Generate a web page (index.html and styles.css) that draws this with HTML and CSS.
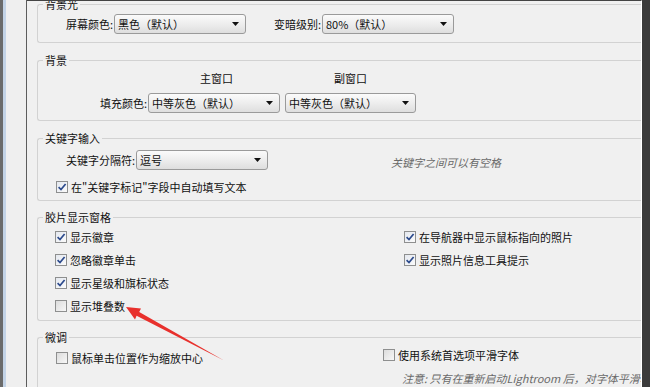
FILE: index.html
```html
<!DOCTYPE html>
<html lang="zh-CN">
<head>
    <meta charset="UTF-8">
    <meta name="viewport" content="width=device-width, initial-scale=1.0">
    <title>界面 | 首选项</title>
    <link rel="stylesheet" href="styles.css">
</head>
<body>
    <div class="left-rail"></div>

    <div class="panel">
        <!-- 背景光 -->
        <fieldset class="group group-lights">
            <legend>背景光</legend>
            <div class="row">
                <span class="field-label lbl-screen">屏幕颜色:</span>
                <div class="select"><span>黑色（默认）</span><svg class="caret" width="7" height="4" viewBox="0 0 7 4"><path d="M0 0h7L3.5 4z"/></svg></div>
                <span class="field-label lbl-dim">变暗级别:</span>
                <div class="select"><span>80%（默认）</span><svg class="caret" width="7" height="4" viewBox="0 0 7 4"><path d="M0 0h7L3.5 4z"/></svg></div>
            </div>
        </fieldset>

        <!-- 背景 -->
        <fieldset class="group group-bg">
            <legend>背景</legend>
            <div class="col-heads">
                <span class="col-head col-main">主窗口</span>
                <span class="col-head">副窗口</span>
            </div>
            <div class="row row-fill">
                <span class="field-label lbl-fill">填充颜色:</span>
                <div class="select"><span>中等灰色（默认）</span><svg class="caret" width="7" height="4" viewBox="0 0 7 4"><path d="M0 0h7L3.5 4z"/></svg></div>
                <div class="select select-second"><span>中等灰色（默认）</span><svg class="caret" width="7" height="4" viewBox="0 0 7 4"><path d="M0 0h7L3.5 4z"/></svg></div>
            </div>
        </fieldset>

        <!-- 关键字输入 -->
        <fieldset class="group group-keys">
            <legend>关键字输入</legend>
            <div class="row">
                <span class="field-label lbl-sep">关键字分隔符:</span>
                <div class="select"><span>逗号</span><svg class="caret" width="7" height="4" viewBox="0 0 7 4"><path d="M0 0h7L3.5 4z"/></svg></div>
                <span class="hint hint-keys">关键字之间可以有空格</span>
            </div>
            <label class="check check-keys">
                <span class="box checked"><svg width="10" height="10" viewBox="0 0 10 10"><path d="M1.6 5.2 4 7.6 8.6 2"/></svg></span>
                在"关键字标记"字段中自动填写文本
            </label>
        </fieldset>

        <!-- 胶片显示窗格 -->
        <fieldset class="group group-film">
            <legend>胶片显示窗格</legend>
            <div class="check-grid">
                <label class="check"><span class="box checked"><svg width="10" height="10" viewBox="0 0 10 10"><path d="M1.6 5.2 4 7.6 8.6 2"/></svg></span>显示徽章</label>
                <label class="check"><span class="box checked"><svg width="10" height="10" viewBox="0 0 10 10"><path d="M1.6 5.2 4 7.6 8.6 2"/></svg></span>在导航器中显示鼠标指向的照片</label>
                <label class="check"><span class="box checked"><svg width="10" height="10" viewBox="0 0 10 10"><path d="M1.6 5.2 4 7.6 8.6 2"/></svg></span>忽略徽章单击</label>
                <label class="check"><span class="box checked"><svg width="10" height="10" viewBox="0 0 10 10"><path d="M1.6 5.2 4 7.6 8.6 2"/></svg></span>显示照片信息工具提示</label>
                <label class="check"><span class="box checked"><svg width="10" height="10" viewBox="0 0 10 10"><path d="M1.6 5.2 4 7.6 8.6 2"/></svg></span>显示星级和旗标状态</label>
                <span></span>
                <label class="check"><span class="box"></span>显示堆叠数</label>
            </div>
        </fieldset>

        <!-- 微调 -->
        <fieldset class="group group-tune">
            <legend>微调</legend>
            <div class="tune-grid">
                <label class="check check-zoom"><span class="box"></span>鼠标单击位置作为缩放中心</label>
                <div class="tune-right">
                    <label class="check"><span class="box"></span>使用系统首选项平滑字体</label>
                    <span class="hint hint-font">注意: 只有在重新启动Lightroom 后，对字体平滑功能所做的更改才会生效。</span>
                </div>
            </div>
        </fieldset>
    </div>

    <div class="right-rail"></div>

    <svg class="callout" width="650" height="387" viewBox="0 0 650 387">
        <polygon points="126,307 141,308.5 139.2,312 224,360.5 136.6,315.8 135,319.5"/>
    </svg>
</body>
</html>
```

FILE: styles.css
```css
:root {
    --panel-bg: #f0f0f0;
    --group-line: #d2d2d2;
    --text-color: #111;
    --hint-color: #6a6a6a;
    --arrow-red: #e8302c;
}

* {
    margin: 0;
    padding: 0;
    box-sizing: border-box;
}

body {
    width: 650px;
    height: 387px;
    overflow: hidden;
    display: flex;
    position: relative;
    background: #3b3b3b;
    font-family: "Noto Sans CJK SC", "Noto Sans", sans-serif;
    font-size: 11px;
    color: var(--text-color);
}

/* Window edges */
.left-rail {
    width: 27px;
    flex: none;
    background: linear-gradient(to right, #6b6b6b 0 3px, #c3d3e6 3px 6px, #efefef 6px);
    border-right: 1px solid #5c5c5c;
}

.panel {
    width: 615px;
    flex: none;
    background: var(--panel-bg);
    border-top: 1px solid #444;
    border-right: 1px solid #fff;
    padding-left: 10px;
    overflow: hidden;
}

.right-rail {
    flex: 1;
}

/* Group boxes */
.group {
    border: 1px solid var(--group-line);
    border-right: 0;
    border-radius: 3px 0 0 3px;
    min-width: 0;
    margin-top: 10px;
}

.group legend {
    margin-left: 5px;
    padding: 0 2px;
    line-height: 14px;
}

.group-lights {
    margin-top: -4px;
}

.group-film,
.group-tune {
    margin-top: 9px;
}

.row {
    display: flex;
    align-items: center;
    height: 20px;
}

.group-lights .row {
    margin: 3px 0 8px;
}

.field-label {
    text-align: right;
    margin-right: 1px;
    white-space: nowrap;
}

.lbl-screen { width: 75px; }
.lbl-dim { width: 75px; }
.lbl-fill { width: 109px; }
.lbl-sep { width: 97px; }

/* Combo boxes */
.select {
    width: 132px;
    height: 20px;
    flex: none;
    display: flex;
    align-items: center;
    justify-content: space-between;
    padding: 0 6px 0 3px;
    border: 1px solid #9a9a9a;
    border-radius: 3px;
    background: linear-gradient(#fbfbfb, #ececec 55%, #dedede);
    white-space: nowrap;
}

.caret {
    fill: #111;
}

.select-second {
    margin-left: 5px;
    width: 131px;
}

/* 背景 */
.col-heads {
    display: flex;
    padding-left: 110px;
    margin-top: 4px;
    line-height: 15px;
}

.col-head {
    width: 131px;
    text-align: center;
}

.col-main {
    width: 137px;
}

.group-bg .row-fill {
    margin: 7px 0 7px;
}

/* 关键字输入 */
.group-keys .row {
    margin-top: 5px;
}

.hint {
    font-style: italic;
    color: var(--hint-color);
    white-space: nowrap;
}

.hint-keys {
    margin-left: 123px;
    margin-top: 3px;
}

/* Checkboxes */
.check {
    display: flex;
    align-items: center;
    gap: 3px;
    height: 16px;
    white-space: nowrap;
}

.box {
    width: 12px;
    height: 12px;
    flex: none;
    display: flex;
    align-items: center;
    justify-content: center;
    border: 1px solid #8e8f8f;
    background: linear-gradient(135deg, #dcdcdc, #f7f7f7);
}

.box.checked {
    background: linear-gradient(135deg, #e4e8ef, #fbfbfb);
}

.box svg path {
    fill: none;
    stroke: #2c4a8c;
    stroke-width: 1.7;
}

.check-keys {
    margin: 9px 0 5px 18px;
}

.check-grid {
    display: grid;
    grid-template-columns: 349px auto;
    row-gap: 7px;
    padding: 5px 0 6px 17px;
}

.tune-grid {
    display: grid;
    grid-template-columns: 327px auto;
    padding: 3px 0 24px 18px;
}

.check-zoom {
    margin-top: 3px;
}

.tune-right {
    display: flex;
    flex-direction: column;
    gap: 8px;
    overflow: hidden;
}

.hint-font {
    padding-left: 19px;
    line-height: 15px;
}

/* Red callout arrow */
.callout {
    position: absolute;
    left: 0;
    top: 0;
    pointer-events: none;
}

.callout polygon {
    fill: var(--arrow-red);
}
```
